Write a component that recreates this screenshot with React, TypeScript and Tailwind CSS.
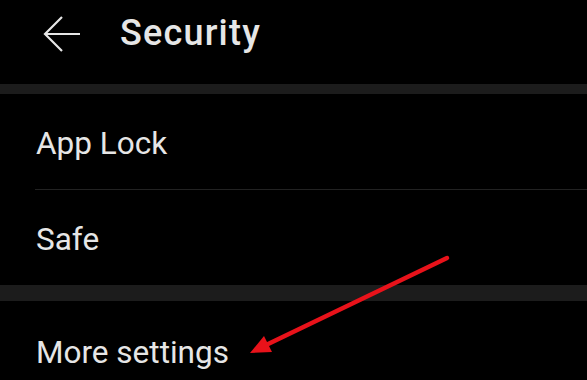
export default function App() {
  const font = { fontFamily: "Roboto, 'Liberation Sans', sans-serif" };
  return (
    <div className="relative w-[587px] h-[380px] overflow-hidden bg-black text-[#e6e6e6]" style={font}>
      {/* header */}
      <div className="flex h-[84px] items-start">
        <svg className="ml-[43px] mt-[16px] h-[38px] w-[40px]" viewBox="0 0 40 38" fill="none">
          <path d="M37 18H2M19 1L2 18l17 17" stroke="#e6e6e6" strokeWidth="2.2" />
        </svg>
        <div className="ml-[37px] mt-[15px] text-[36px] leading-[36px] font-medium tracking-[1.2px]">Security</div>
      </div>
      <div className="h-[10px] bg-[#1c1c1c]" />

      <div className="h-[95px] pl-[36px] pt-[34px] text-[31.5px] leading-[31px]">App Lock</div>
      <div className="ml-[35px] h-px bg-[#222222]" />
      <div className="h-[95px] pl-[36px] pt-[34px] text-[31.5px] leading-[31px]">Safe</div>

      <div className="h-[16px] bg-[#1c1c1c]" />
      <div className="pl-[36px] pt-[36px] text-[31.5px] leading-[31px]">More settings</div>

      {/* annotation arrow */}
      <svg className="absolute left-0 top-0 h-[380px] w-[587px]" viewBox="0 0 587 380">
        <line x1="447" y1="258" x2="266" y2="345" stroke="#e8121a" strokeWidth="4.5" strokeLinecap="round" />
        <polygon points="250,353 272,352 264,336" fill="#e8121a" />
      </svg>
    </div>
  );
}
